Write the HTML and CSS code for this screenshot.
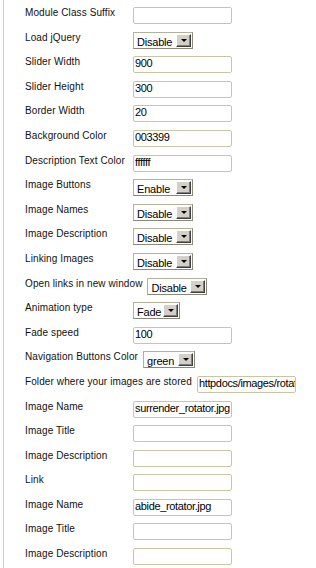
FILE: index.html
```html
<!DOCTYPE html>
<html lang="en">
<head>
    <meta charset="UTF-8">
    <meta name="viewport" content="width=device-width, initial-scale=1.0">
    <title>Module Parameters</title>
    <link rel="stylesheet" href="styles.css">
</head>
<body>

<div class="panel">
    <div class="param-row">
        <span class="param-label">Module Class Suffix</span>
        <input class="text-field" type="text" value="">
    </div>
    <div class="param-row">
        <span class="param-label">Load jQuery</span>
        <span class="select-box w-disable"><span class="select-value">Disable</span><span class="select-btn"></span></span>
    </div>
    <div class="param-row">
        <span class="param-label">Slider Width</span>
        <input class="text-field" type="text" value="900">
    </div>
    <div class="param-row">
        <span class="param-label">Slider Height</span>
        <input class="text-field" type="text" value="300">
    </div>
    <div class="param-row">
        <span class="param-label">Border Width</span>
        <input class="text-field" type="text" value="20">
    </div>
    <div class="param-row">
        <span class="param-label">Background Color</span>
        <input class="text-field" type="text" value="003399">
    </div>
    <div class="param-row">
        <span class="param-label">Description Text Color</span>
        <input class="text-field" type="text" value="ffffff">
    </div>
    <div class="param-row">
        <span class="param-label">Image Buttons</span>
        <span class="select-box w-disable"><span class="select-value">Enable</span><span class="select-btn"></span></span>
    </div>
    <div class="param-row">
        <span class="param-label">Image Names</span>
        <span class="select-box w-disable"><span class="select-value">Disable</span><span class="select-btn"></span></span>
    </div>
    <div class="param-row">
        <span class="param-label">Image Description</span>
        <span class="select-box w-disable"><span class="select-value">Disable</span><span class="select-btn"></span></span>
    </div>
    <div class="param-row">
        <span class="param-label">Linking Images</span>
        <span class="select-box w-disable"><span class="select-value">Disable</span><span class="select-btn"></span></span>
    </div>
    <div class="param-row">
        <span class="param-label">Open links in new window</span>
        <span class="select-box w-disable"><span class="select-value">Disable</span><span class="select-btn"></span></span>
    </div>
    <div class="param-row">
        <span class="param-label">Animation type</span>
        <span class="select-box w-fade"><span class="select-value">Fade</span><span class="select-btn"></span></span>
    </div>
    <div class="param-row">
        <span class="param-label">Fade speed</span>
        <input class="text-field" type="text" value="100">
    </div>
    <div class="param-row">
        <span class="param-label">Navigation Buttons Color</span>
        <span class="select-box w-green"><span class="select-value">green</span><span class="select-btn"></span></span>
    </div>
    <div class="param-row">
        <span class="param-label">Folder where your images are stored</span>
        <input class="text-field" type="text" value="httpdocs/images/rotator/">
    </div>
    <div class="param-row">
        <span class="param-label">Image Name</span>
        <input class="text-field" type="text" value="surrender_rotator.jpg">
    </div>
    <div class="param-row">
        <span class="param-label">Image Title</span>
        <input class="text-field" type="text" value="">
    </div>
    <div class="param-row">
        <span class="param-label">Image Description</span>
        <input class="text-field" type="text" value="">
    </div>
    <div class="param-row">
        <span class="param-label">Link</span>
        <input class="text-field" type="text" value="">
    </div>
    <div class="param-row">
        <span class="param-label">Image Name</span>
        <input class="text-field" type="text" value="abide_rotator.jpg">
    </div>
    <div class="param-row">
        <span class="param-label">Image Title</span>
        <input class="text-field" type="text" value="">
    </div>
    <div class="param-row">
        <span class="param-label">Image Description</span>
        <input class="text-field" type="text" value="">
    </div>
</div>

</body>
</html>
```

FILE: styles.css
```css
body {
    margin: 0;
    padding: 0;
    background-color: #fff;
    font-family: 'Liberation Sans', Arial, sans-serif;
    color: #111;
    overflow: hidden;
}

.panel {
    box-sizing: border-box;
    height: 100vh;
    overflow: hidden;
    margin-left: 3px;
    border-left: 1px solid #d0cfc4;
    padding: 7px 0 0 21px;
}

.param-row {
    display: flex;
    align-items: flex-start;
    height: 24.6px;
}

.param-label {
    flex: 0 0 auto;
    min-width: 103px;
    margin-right: 4px;
    margin-top: -1px;
    font-size: 10px;
    line-height: 13px;
    letter-spacing: 0.1px;
    white-space: nowrap;
}

.text-field {
    flex: 0 0 auto;
    box-sizing: border-box;
    width: 99px;
    height: 17px;
    margin: 0 0 0 1px;
    padding: 0 0 3px 1px;
    border: 1px solid #c9c6a6;
    border-radius: 2px;
    background-color: #fff;
    font-family: 'Liberation Sans', Arial, sans-serif;
    font-size: 11px;
    letter-spacing: -0.35px;
    color: #000;
    outline: none;
}

.select-box {
    flex: 0 0 auto;
    box-sizing: border-box;
    display: flex;
    align-items: center;
    justify-content: space-between;
    height: 17px;
    margin-left: 1px;
    padding: 0 1px 0 3px;
    border: 1px solid #b4b19a;
    border-right-color: #8a8878;
    border-bottom-color: #8a8878;
    background-color: #fff;
    font-size: 11px;
    letter-spacing: -0.2px;
    color: #000;
}

.select-value {
    padding-top: 3px;
    line-height: 12px;
}

.w-disable {
    width: 60px;
}

.w-fade {
    width: 47px;
}

.w-green {
    width: 52px;
}

.select-btn {
    position: relative;
    box-sizing: border-box;
    width: 15px;
    height: 13px;
    background-color: #d4d0c8;
    border-top: 1px solid #fff;
    border-left: 1px solid #fff;
    border-right: 1px solid #404040;
    border-bottom: 1px solid #404040;
    box-shadow: inset -1px -1px 0 #808080;
}

.select-btn::after {
    content: "";
    position: absolute;
    left: 4px;
    top: 4px;
    border-left: 3px solid transparent;
    border-right: 3px solid transparent;
    border-top: 3px solid #000;
}
```
